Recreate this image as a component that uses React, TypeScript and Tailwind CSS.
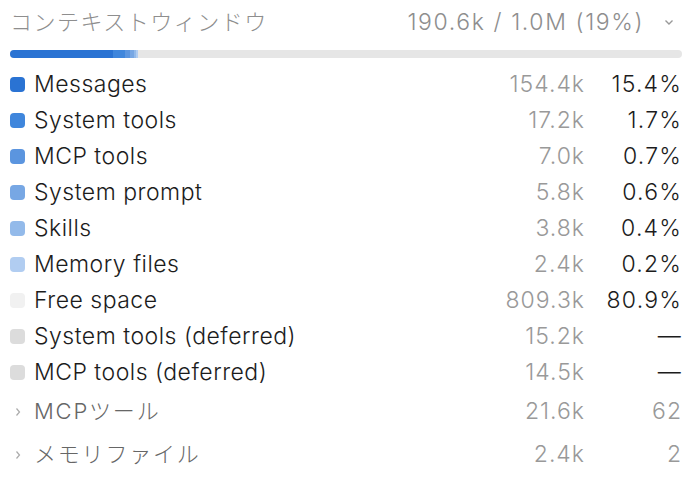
type Row = {
  label: string;
  tokens: string;
  pct: string;
  color: string;
  share: number;
};

const rows: Row[] = [
  { label: "Messages", tokens: "154.4k", pct: "15.4%", color: "bg-[#2a73d3]", share: 15.4 },
  { label: "System tools", tokens: "17.2k", pct: "1.7%", color: "bg-[#3f86dc]", share: 1.7 },
  { label: "MCP tools", tokens: "7.0k", pct: "0.7%", color: "bg-[#5b95df]", share: 0.7 },
  { label: "System prompt", tokens: "5.8k", pct: "0.6%", color: "bg-[#77a7e4]", share: 0.6 },
  { label: "Skills", tokens: "3.8k", pct: "0.4%", color: "bg-[#93baea]", share: 0.4 },
  { label: "Memory files", tokens: "2.4k", pct: "0.2%", color: "bg-[#b1cdf1]", share: 0.2 },
  { label: "Free space", tokens: "809.3k", pct: "80.9%", color: "bg-[#f1f1f1]", share: 0 },
  { label: "System tools (deferred)", tokens: "15.2k", pct: "—", color: "bg-[#dcdcdc]", share: 0 },
  { label: "MCP tools (deferred)", tokens: "14.5k", pct: "—", color: "bg-[#dcdcdc]", share: 0 },
];

const groups = [
  { label: "MCPツール", tokens: "21.6k", count: "62" },
  { label: "メモリファイル", tokens: "2.4k", count: "2" },
];

export default function App() {
  return (
    <div
      className="w-[692px] h-[480px] bg-white text-[#1c1c1c] overflow-hidden"
      style={{ fontFamily: 'Inter, "Noto Sans CJK JP", sans-serif' }}
    >
      {/* Header => "title , total , chevron" */}
      <div className="flex items-center justify-between h-[44px] pl-[10px] pr-[18px]">
        <span className="text-[22px] tracking-[1.5px] text-[#8e8e8e] font-light">コンテキストウィンドウ</span>
        <div className="flex items-center gap-[20px]">
          <span className="text-[23px] tracking-[1.6px] text-[#8e8e8e] font-light">190.6k / 1.0M (19%)</span>
          <svg width="10" height="8" viewBox="0 0 10 8" className="text-[#999]">
            <path d="M1.5 2.5 L5 6 L8.5 2.5" fill="none" stroke="currentColor" strokeWidth="1.4" />
          </svg>
        </div>
      </div>

      {/* Usage bar */}
      <div className="mx-[10px] mt-[6px] h-[8px] rounded-full bg-[#e6e6e6] overflow-hidden flex">
        {rows
          .filter((r) => r.share > 0)
          .map((r) => (
            <div key={r.label} className={`h-full ${r.color}`} style={{ width: `${r.share}%` }} />
          ))}
      </div>

      {/* Category rows */}
      <div className="mt-[8px] px-[10px] font-light">
        {rows.map((r) => (
          <div key={r.label} className="flex items-center h-[36px] text-[23px]">
            <span className={`w-[15px] h-[15px] rounded-[4px] ${r.color}`}></span>
            <span className="ml-[9px] flex-1 tracking-[0.5px]">{r.label}</span>
            <span className="text-[#999] tracking-[1px]">{r.tokens}</span>
            <span className="w-[97px] text-right tracking-[1.2px]">{r.pct}</span>
          </div>
        ))}

        {groups.map((g) => (
          <div key={g.label} className="flex items-center h-[43px] text-[23px] text-[#666] first:mt-[4px]">
            <span className="w-[15px] flex justify-center">
              <svg width="8" height="10" viewBox="0 0 8 10" className="text-[#aaa]">
                <path d="M2.5 1.5 L5.5 5 L2.5 8.5" fill="none" stroke="currentColor" strokeWidth="1.2" />
              </svg>
            </span>
            <span className="ml-[9px] flex-1 text-[22px] tracking-[1.8px]">{g.label}</span>
            <span className="text-[#999] tracking-[1px]">{g.tokens}</span>
            <span className="w-[97px] text-right text-[#999] tracking-[1px]">{g.count}</span>
          </div>
        ))}
      </div>
    </div>
  );
}
